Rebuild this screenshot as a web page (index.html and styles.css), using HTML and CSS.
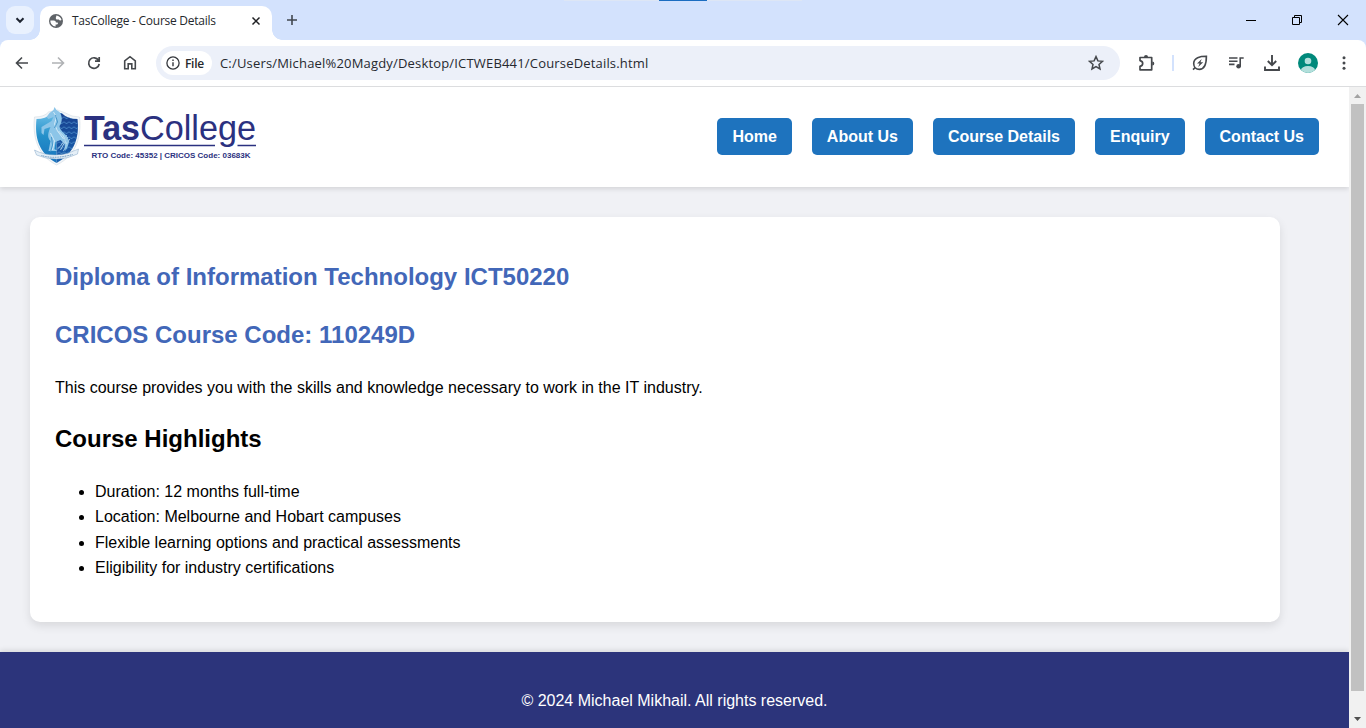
FILE: index.html
```html
<!DOCTYPE html>
<html lang="en">
<head>
<meta charset="utf-8">
<title>TasCollege - Course Details</title>
<link rel="stylesheet" href="styles.css">
</head>
<body>
<div class="window">
  <div class="tabstrip">
    <div class="screen-bar"><i></i></div>
    <div class="tab-search"><svg width="28" height="28" viewBox="0 0 28 28"><path d="M10.5 12.3l3.5 3.5 3.5-3.5" fill="none" stroke="#1d2430" stroke-width="2"/></svg></div>
    <div class="tab">
      <svg class="globe" width="14" height="14" viewBox="0 0 14 14"><circle cx="7" cy="7" r="7" fill="#5f6368"/><path d="M7.3 1.5C10 1.6 12 3.6 12.5 6c-1 .8-2.3.4-2.6-.6H8.2c-1 0-1.4-.7-1.4-1.5.1-.9.6-1.4.5-2.4zM1.4 6.6h3.3c1.5 0 2.2.8 2.2 2h1.4c1 0 1 1.7-.3 1.8H6.6v2.1C3.5 12.5 1.200 9.700 1.400 6.600z" fill="#fff"/></svg>
      <span class="tab-title">TasCollege - Course Details</span>
      <svg class="tab-close" width="10" height="10" viewBox="0 0 10 10"><path d="M1.500 1.500l7 7M8.500 1.500l-7 7" stroke="#1f2023" stroke-width="1.500"/></svg>
    </div>
    <svg class="new-tab" width="12" height="12" viewBox="0 0 12 12"><path d="M6 1v10M1 6h10" stroke="#41474f" stroke-width="1.600"/></svg>
    <div class="win-controls">
      <svg width="46" height="40" viewBox="0 0 46 40"><path d="M18 20.500h10" stroke="#000"/></svg>
      <svg width="46" height="40" viewBox="0 0 46 40"><path d="M18.500 17.500h7v7h-7zM20.500 17.500v-2h7v7h-2" fill="none" stroke="#000"/></svg>
      <svg width="46" height="40" viewBox="0 0 46 40"><path d="M18 15l10 10M28 15L18 25" stroke="#000" stroke-width="1.100"/></svg>
    </div>
  </div>
  <div class="toolbar">
    <svg class="ic" width="36" height="46" viewBox="0 0 36 46"><path d="M18 17.500L12.500 23l5.500 5.500M12.500 23H24" transform="translate(4 0)" fill="none" stroke="#45484c" stroke-width="1.600"/></svg>
    <svg class="ic" width="36" height="46" viewBox="0 0 36 46"><path d="M22 17.500l5.500 5.500-5.500 5.500M27.500 23H16" fill="none" stroke="#b0b2b5" stroke-width="1.600"/></svg>
    <svg class="ic" width="36" height="46" viewBox="0 0 36 46"><path d="M26.500 20.300A5.300 5.300 0 1 0 27.200 24M27.200 17v4.200H23" fill="none" stroke="#45484c" stroke-width="1.700"/></svg>
    <svg class="ic" width="36" height="46" viewBox="0 0 36 46"><path d="M16.700 28.800V20.800L22 16.700l5.300 4.100v8h-3.500v-4.900h-3.600v4.900z" fill="none" stroke="#45484c" stroke-width="1.600"/></svg>
    <div class="omnibox">
      <div class="chip"><svg width="14" height="14" viewBox="0 0 14 14"><circle cx="7" cy="7" r="6.100" fill="none" stroke="#34373c" stroke-width="1.300"/><path d="M7 6.300v4M7 3.500v1.500" stroke="#34373c" stroke-width="1.400"/></svg><span>File</span></div>
      <span class="url">C:/Users/Michael%20Magdy/Desktop/ICTWEB441/CourseDetails.html</span>
      <svg class="star" width="16" height="16" viewBox="0 0 16 16"><path d="M8 1.600l1.900 4.300 4.600.4-3.500 3.100 1 4.600L8 11.600 4 14l1-4.600L1.500 6.300l4.600-.4z" fill="none" stroke="#45484c" stroke-width="1.500"/></svg>
    </div>
    <div class="extension">
      <svg width="18" height="20" viewBox="0 0 18 20"><path d="M2 4.500h11.700v12.300H2v-3.500c3.600-.8 3.600-5 0-5.700z" fill="none" stroke="#45484c" stroke-width="1.700" stroke-linejoin="round"/><path d="M6 4a2 2 0 0 1 4 0zM14.300 8.600a2 2 0 0 1 0 4z" fill="#45484c"/></svg>
    </div>
    <i class="divider"></i>
    <div class="actions">
      <svg width="18" height="18" viewBox="0 0 18 18"><path d="M15.400 2.300C9 2.300 2.700 3.500 2.700 9.600c0 3.600 2.600 5.800 5.600 5.800 6 0 7.100-6.800 7.100-13.100zM2 15.700l2.600-2.500" fill="none" stroke="#45484c" stroke-width="1.600"/><path d="M10.700 4.900L6 9.500h2.600l-1.400 3.600 5-4.900H9.500z" fill="#45484c"/></svg>
      <svg width="18" height="16" viewBox="0 0 18 16"><path d="M2 3h8.500M2 6.200h8.500M2 9.400h5.500M13.200 11.500V3H16.700" fill="none" stroke="#45484c" stroke-width="1.600"/><circle cx="11.600" cy="11.300" r="2.300" fill="#45484c"/></svg>
      <svg width="18" height="18" viewBox="0 0 18 18"><path d="M9 1v10M4.800 7L9 11.200 13.200 7M2 12.500V16h14v-3.500" fill="none" stroke="#45484c" stroke-width="1.900"/></svg>
      <svg width="20" height="20" viewBox="0 0 20 20"><defs><clipPath id="face"><circle cx="10" cy="10" r="10"/></clipPath></defs><circle cx="10" cy="10" r="10" fill="#00897b"/><g fill="#b2dfdb" clip-path="url(#face)"><circle cx="10" cy="8" r="3.300"/><ellipse cx="10" cy="17" rx="7" ry="4"/></g></svg>
      <svg width="4" height="16" viewBox="0 0 4 16"><g fill="#45484c"><circle cx="2" cy="2.700" r="1.500"/><circle cx="2" cy="8" r="1.500"/><circle cx="2" cy="13.300" r="1.500"/></g></svg>
    </div>
  </div>
  <div class="viewport">
    <div class="page">
      <header class="site-header">
        <svg class="logo" width="230" height="64" viewBox="0 0 230 64">
          <defs>
            <linearGradient id="lt" x1="0" y1="0" x2="0" y2="1"><stop offset="0" stop-color="#67bce6"/><stop offset=".45" stop-color="#238fc9"/><stop offset="1" stop-color="#1873bd"/></linearGradient>
            <linearGradient id="dk" x1="0" y1="0" x2="0" y2="1"><stop offset="0" stop-color="#18418f"/><stop offset="1" stop-color="#1760ae"/></linearGradient>
            <pattern id="scales" width="5" height="5" patternUnits="userSpaceOnUse"><path d="M0 3q2.500-4 5 0" fill="none" stroke="#4f91cd" stroke-width=".8"/></pattern>
          </defs>
          <g transform="translate(1.500 1)">
          <path d="M3 11q10 0 14-5l9-2 8 3q6 4 14 4c2 18-2 38-23 48C5 49 1 29 3 11z" fill="#f1f5f9" stroke="#d3dbe3" stroke-width=".6"/>
          <path d="M5 13q9 0 15-5h5v49C7 47 3 31 5 13z" fill="url(#lt)"/>
          <path id="right-half" d="M25 7h5q6 6 16 6c2 17-2 34-21 44z" fill="url(#dk)"/>
          <path d="M25 7h5q6 6 16 6c2 17-2 34-21 44z" fill="url(#scales)"/>
          <path d="M18 7l4-3 1-3 2 3 3 2c3 4 3 10 0 14 0 4 4 6 7 10s3 6 1 11l-2 4-1-7-4-4-5 2-1 7 3 2h-9l2-10c-4-4-2-9 0-14l-6 2-1 6-2-2 0-6 10-6 2-4-5 2-2-2z" fill="#8cc5e8"/>
          <path d="M22 6l3 5-2 7 3 7 6 8M19 27l4 8-2 9M27 25l5 5 3 8" fill="none" stroke="#cfe8f6" stroke-width="1"/>
          <path d="M24 9l2 7-3 6M20 31l1 8-2 7" fill="none" stroke="#3c90c6" stroke-width=".9"/>
          <path d="M26 43c5-4 7-9 9-14M29 44l7-13M32 45l6-12" stroke="#a5cdea" stroke-width="1" fill="none"/>
          <path d="M3 44q9 5 21 5t23-6l-1 5q-10 5-21 5T5 49z" fill="#e5eff7" stroke="#85a7c7" stroke-width=".5"/>
          <path d="M10 49.500q13 4 31-1" stroke="#5889b6" stroke-width="1" stroke-dasharray="1 .7" fill="none"/>
          </g>
          <text class="wordmark bold" x="54" y="35.300" textLength="56" lengthAdjust="spacingAndGlyphs">Tas</text>
          <text class="wordmark" x="110" y="35.300" textLength="116" lengthAdjust="spacingAndGlyphs">College</text>
          <path d="M54 40.500h131M207.500 40.500H226" stroke="#2b3180" stroke-width="1.500"/>
          <text class="codes" x="61.500" y="52.800" textLength="159" lengthAdjust="spacingAndGlyphs">RTO Code: 45352 | CRICOS Code: 03683K</text>
        </svg>
        <nav class="nav">
          <a>Home</a><a>About Us</a><a>Course Details</a><a>Enquiry</a><a>Contact Us</a>
        </nav>
      </header>
      <main class="card">
        <h2 class="course-title">Diploma of Information Technology ICT50220</h2>
        <h2 class="course-title">CRICOS Course Code: 110249D</h2>
        <p>This course provides you with the skills and knowledge necessary to work in the IT industry.</p>
        <h2>Course Highlights</h2>
        <ul>
          <li>Duration: 12 months full-time</li>
          <li>Location: Melbourne and Hobart campuses</li>
          <li>Flexible learning options and practical assessments</li>
          <li>Eligibility for industry certifications</li>
        </ul>
      </main>
      <footer class="site-footer">© 2024 Michael Mikhail. All rights reserved.</footer>
    </div>
    <div class="scrollbar">
      <svg width="17" height="17" viewBox="0 0 17 17"><path d="M5 11h7L8.500 7z" fill="#a3a3a3"/></svg>
      <i class="thumb"></i>
      <svg width="17" height="17" viewBox="0 0 17 17"><path d="M5 6h7l-3.500 4z" fill="#505050"/></svg>
    </div>
  </div>
</div>
</body>
</html>
```
FILE: styles.css
```css
* { box-sizing: border-box; }
html, body { margin: 0; height: 728px; overflow: hidden; }
svg { display: block; flex: none; }
.window { height: 728px; display: flex; flex-direction: column; background: #d3e2fd; font-family: "Open Sans", "Noto Sans", sans-serif; }

.tabstrip { position: relative; height: 40px; flex: none; display: flex; align-items: center; padding-left: 6px; }
.screen-bar { position: absolute; top: 0; left: 564px; width: 238px; height: 1px; background: #dde6f5; display: flex; justify-content: center; }
.screen-bar i { width: 48px; height: 1px; background: #1b6dc1; }
.tab-search { width: 28px; height: 28px; border-radius: 9px; background: #e9f1fe; }
.tab { position: relative; align-self: flex-end; width: 232px; height: 34px; margin-left: 6px; padding: 0 11px 5px 9px; display: flex; align-items: center; background: #fff; border-radius: 10px 10px 0 0; }
.tab::before, .tab::after { content: ""; position: absolute; bottom: 0; width: 10px; height: 10px; }
.tab::before { left: -10px; background: radial-gradient(circle at 0 0, transparent 9.5px, #fff 10px); }
.tab::after { right: -10px; background: radial-gradient(circle at 100% 0, transparent 9.5px, #fff 10px); }
.tab-title { flex: 1; margin-left: 9px; font-size: 12px; letter-spacing: -0.26px; line-height: 20px; color: #25282d; white-space: nowrap; }
.new-tab { margin-left: 14px; }
.win-controls { display: flex; margin-left: auto; }

.toolbar { height: 47px; flex: none; display: flex; align-items: center; background: #fff; border-bottom: 1px solid #dcdddf; border-radius: 8px 8px 0 0; }
.omnibox { width: 964px; height: 34px; margin-left: 12px; padding: 0 16px 0 5px; display: flex; align-items: center; background: #ecf0f9; border-radius: 17px; }
.chip { width: 51px; height: 24px; padding-left: 5px; display: flex; align-items: center; gap: 5px; background: #fff; border-radius: 12px; font-size: 12px; font-weight: 600; letter-spacing: -0.3px; color: #26282c; }
.url { flex: 1; margin-left: 8px; font-size: 13px; letter-spacing: 0.18px; color: #26292f; white-space: nowrap; }
.extension { width: 52px; display: flex; justify-content: center; padding-left: 2px; }
.divider { width: 2px; height: 16px; background: #d3e2fd; }
.actions { display: grid; grid-template-columns: repeat(5, 36px); justify-items: center; align-items: center; margin-left: 8px; }

.viewport { flex: 1; min-height: 0; display: flex; background: #f0f1f5; }
.page { flex: 1; overflow: hidden; font: 16px/1.6 "Liberation Sans", Arial, sans-serif; color: #000; }
.site-header { height: 100px; padding: 0 30px; display: flex; justify-content: space-between; align-items: center; background: #fff; box-shadow: 0 2px 5px rgba(0, 0, 0, .12); }
.wordmark { font-size: 35px; fill: #2b3180; }
.bold { font-weight: 700; }
.codes { font-size: 7.6px; font-weight: 700; fill: #2b3180; }
.nav { display: flex; gap: 20px; margin-bottom: 2px; }
.nav a { height: 37px; padding: 0 15px; line-height: 37px; border-radius: 5px; background: #1e73be; color: #fff; font-weight: 700; white-space: nowrap; }
.card { width: 1250px; height: 405px; margin: 30px; padding: 41px 25px 25px; border-radius: 10px; background: #fff; box-shadow: 0 4px 10px rgba(0, 0, 0, .1); }
.card h2 { margin: 0 0 19.92px; font-size: 24px; line-height: 38.4px; }
.card .course-title { color: #4267b8; }
.card p { margin: 0 0 19.92px; }
.card ul { margin: 0; padding: 0.2px 0 0 40px; }
.site-footer { height: 100px; padding-top: 36px; text-align: center; background: #2c347b; color: #fff; box-shadow: 0 -2px 5px rgba(0, 0, 0, .1); }

.scrollbar { width: 17px; flex: none; display: flex; flex-direction: column; align-items: center; background: #f1f1f1; }
.thumb { width: 13px; height: 587px; margin-bottom: 20px; background: #c1c1c1; }
```
